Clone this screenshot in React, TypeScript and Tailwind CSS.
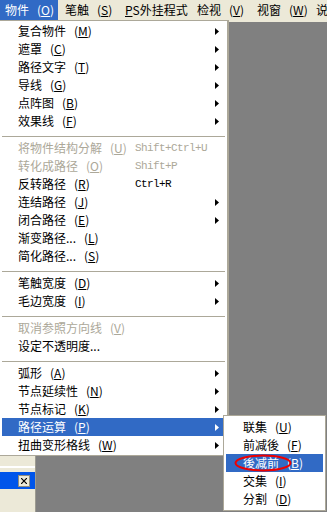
import React from "react";

type Item =
  | "sep"
  | {
      label: string;
      k?: string;
      shortcut?: string;
      sub?: boolean;
      disabled?: boolean;
      active?: boolean;
    };

const mainItems: Item[] = [
  { label: "复合物件", k: "M", sub: true },
  { label: "遮罩", k: "C", sub: true },
  { label: "路径文字", k: "T", sub: true },
  { label: "导线", k: "G", sub: true },
  { label: "点阵图", k: "B", sub: true },
  { label: "效果线", k: "F", sub: true },
  "sep",
  { label: "将物件结构分解", k: "U", shortcut: "Shift+Ctrl+U", disabled: true },
  { label: "转化成路径", k: "O", shortcut: "Shift+P", disabled: true },
  { label: "反转路径", k: "R", shortcut: "Ctrl+R" },
  { label: "连结路径", k: "J", sub: true },
  { label: "闭合路径", k: "E", sub: true },
  { label: "渐变路径...", k: "L" },
  { label: "简化路径...", k: "S" },
  "sep",
  { label: "笔触宽度", k: "D", sub: true },
  { label: "毛边宽度", k: "I", sub: true },
  "sep",
  { label: "取消参照方向线", k: "V", disabled: true },
  { label: "设定不透明度..." },
  "sep",
  { label: "弧形", k: "A", sub: true },
  { label: "节点延续性", k: "N", sub: true },
  { label: "节点标记", k: "K", sub: true },
  { label: "路径运算", k: "P", sub: true, active: true },
  { label: "扭曲变形格线", k: "W", sub: true },
];

const subItems: Item[] = [
  { label: "联集", k: "U" },
  { label: "前减後", k: "F" },
  { label: "後减前", k: "B", active: true },
  { label: "交集", k: "I" },
  { label: "分割", k: "D" },
];

function Arrow({ white }: { white?: boolean }) {
  return (
    <svg width="4" height="7" viewBox="0 0 4 7" className="shrink-0">
      <path d="M0 0 L4 3.5 L0 7 Z" fill={white ? "#ffffff" : "#000000"} />
    </svg>
  );
}

function Row({ item, sub }: { item: Exclude<Item, "sep">; sub?: boolean }) {
  const color = item.active
    ? "bg-[#316ac5] text-white"
    : item.disabled
    ? "text-[#aca899]"
    : "text-black";
  return (
    <div
      className={`flex items-center h-[18px] ${
        sub ? "pl-[17px] pr-[6px]" : "pl-[16px] pr-[6px]"
      } ${color}`}
    >
      <div className={`flex items-center whitespace-nowrap ${item.shortcut ? "w-[117px]" : ""}`}>
        <span>{item.label}</span>
        {item.k && (
          <span className="ml-[8px]">
            (<u>{item.k}</u>)
          </span>
        )}
      </div>
      {item.shortcut && (
        <span className="font-['Liberation_Mono',monospace] text-[11px] tracking-[-0.6px]">
          {item.shortcut}
        </span>
      )}
      {item.sub && (
        <span className="ml-auto flex items-center">
          <Arrow white={item.active} />
        </span>
      )}
    </div>
  );
}

function Sep() {
  return (
    <div className="h-[9px] flex items-end pb-[2px]">
      <div className="h-px w-full bg-[#aca899]" />
    </div>
  );
}

function MenuBarItem({
  label,
  k,
  prefix,
  width,
  active,
}: {
  label: string;
  k?: string;
  prefix?: string;
  width: number;
  active?: boolean;
}) {
  return (
    <div
      className={`h-[20px] shrink-0 flex items-center whitespace-nowrap ${
        active ? "bg-[#316ac5] text-white pl-[5px]" : "text-black pl-[7px]"
      }`}
      style={{ width }}
    >
      {prefix ? (
        <span>
          <u>{prefix[0]}</u>
          {prefix.slice(1)}
          {label}
        </span>
      ) : (
        <span>{label}</span>
      )}
      {k && (
        <span className="ml-[8px]">
          (<u>{k}</u>)
        </span>
      )}
    </div>
  );
}

export default function App() {
  return (
    <div className="relative w-[327px] h-[512px] overflow-hidden bg-[#808080] font-['Noto_Sans_CJK_SC','Noto_Sans',sans-serif] text-[12px] leading-none">
      {/* menu bar */}
      <div className="h-[22px] bg-[#ece9d8] flex items-start overflow-hidden">
        <MenuBarItem label="物件" k="O" width={58} active />
        <MenuBarItem label="笔触" k="S" width={60} />
        <MenuBarItem label="外挂程式" prefix="PS" width={72} />
        <MenuBarItem label="检视" k="V" width={60} />
        <MenuBarItem label="视窗" k="W" width={59} />
        <MenuBarItem label="说" width={18} />
      </div>

      {/* workspace */}
      <div className="flex h-[490px]">
        <div className="w-[36px] bg-[#ece9d8] border-r border-[#9d9b90] flex flex-col">
          <div className="h-[444px]" />
          <div className="h-[2px] bg-white" />
          <div className="h-[4px]" />
          <div className="h-[17px] bg-[#0055ea] flex items-center justify-end pr-[5px]">
            <div className="w-[12px] h-[12px] bg-[#ece9d8] border border-[#8e8c80] flex items-center justify-center">
              <svg width="6" height="6" viewBox="0 0 6 6">
                <path d="M0 0 L6 6 M6 0 L0 6" stroke="#000" strokeWidth="1.2" />
              </svg>
            </div>
          </div>
        </div>
        <div className="flex-1" />
      </div>

      {/* main dropdown */}
      <div className="absolute left-[-1px] top-[20px] w-[230px] bg-white border border-[#aca899] border-r-2 pt-px pb-px px-[2px]">
        {mainItems.map((it, i) =>
          it === "sep" ? <Sep key={i} /> : <Row key={i} item={it} />
        )}
      </div>

      {/* submenu */}
      <div className="absolute left-[223px] top-[415px] w-[103px] bg-white border border-[#aca899] p-[2px]">
        {subItems.map((it, i) =>
          it === "sep" ? <Sep key={i} /> : <Row key={i} item={it} sub />
        )}
      </div>

      {/* red annotation ellipse */}
      <svg
        className="absolute left-[234px] top-[454px] pointer-events-none"
        width="58"
        height="18"
        viewBox="0 0 58 18"
      >
        <ellipse cx="29" cy="9" rx="27.5" ry="7.5" fill="none" stroke="#ee0000" strokeWidth="2" />
      </svg>
    </div>
  );
}
